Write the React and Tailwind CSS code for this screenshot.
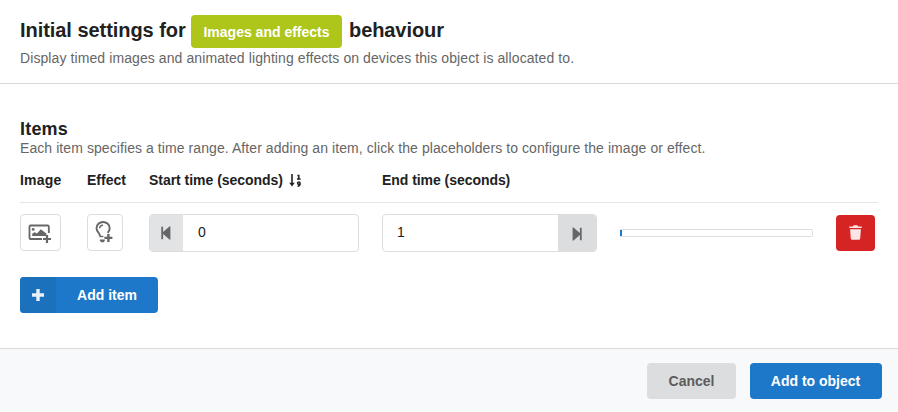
import React from "react";

function Bold({ className = "", children }) {
  return <span className={`font-bold whitespace-nowrap ${className}`}>{children}</span>;
}

function ImagePlusIcon() {
  return (
    <svg width="24" height="20" viewBox="0 0 24 20" fill="none">
      <path d="M14 15H2.5a1 1 0 0 1-1-1V2.5a1 1 0 0 1 1-1h17.3a1 1 0 0 1 1 1V9" stroke="#666" strokeWidth="1.8" />
      <circle cx="5.2" cy="5.4" r="1.4" fill="#666" />
      <path d="M4.2 12V9.8l2.4-1.6 2.4 1.4 3.8-4.4 5.6 4.4V12z" fill="#666" />
      <path d="M19 11v8M15 15h8" stroke="#666" strokeWidth="2.2" />
    </svg>
  );
}

function BulbPlusIcon() {
  return (
    <svg width="20" height="23" viewBox="0 0 20 23" fill="none">
      <path d="M6 14.9c0-2.8-3.5-4.2-3.5-7.7a6.6 6.2 0 0 1 13.2 0c0 2-1 3.3-2 4.7" stroke="#666" strokeWidth="1.9" />
      <path d="M5.6 7.2A3.5 3.3 0 0 1 9 4.2" stroke="#666" strokeWidth="1.4" />
      <path d="M5.4 15.5h4" stroke="#666" strokeWidth="1.4" />
      <path d="M5.8 18.4h5v1.3l-1.2 1.5H7.4l-1.6-1.5z" fill="#666" />
      <path d="M14.4 12.9v8M10.4 16.9h8" stroke="#666" strokeWidth="2.4" />
    </svg>
  );
}

function SortIcon() {
  return (
    <svg width="13" height="14" viewBox="0 0 13 14" fill="none" stroke="#212121">
      <path d="M3 0v10.5" strokeWidth="1.6" />
      <path d="M.2 8.8h5.6L3 12.4z" fill="#212121" stroke="none" />
      <path d="M8.4 1.5h1.4v3.3M8 5h3.6" strokeWidth="1.5" />
      <path d="M11 9.2a1.2 1.2 0 1 0-1.2 1.1H11V8.8M11 9.6c0 1.8-.8 2.6-2.4 2.7" strokeWidth="1.5" />
    </svg>
  );
}

function StepIcon({ flip }) {
  return (
    <svg width="10" height="14" viewBox="0 0 10 14" fill="#666" className={flip ? "-scale-x-100" : ""}>
      <path d="M.3.8h1.8v5.1L8.5.5q.9-.6.9.4v12.2q0 1-.9.4L2.1 8.1v5.2H.3z" />
    </svg>
  );
}

function TrashIcon() {
  return (
    <svg width="13" height="15" viewBox="0 0 13 15" fill="#fbe6e6">
      <path d="M.3 1.4h3.6L4.6.3h3.8l.7 1.1h3.6v1.7H.3zM1.1 4.2h10.8l-.7 9.3q-.1 1.2-1.3 1.2H3.1q-1.2 0-1.3-1.2z" />
    </svg>
  );
}

export default function App() {
  return (
    <div className="flex h-[412px] w-[898px] flex-col overflow-hidden bg-white font-['Liberation_Sans',Arial,sans-serif] text-[#212121]">
      <header className="h-[84px] shrink-0 border-b border-[#d9dadb] px-5 pt-[15px]">
        <h1 className="flex h-[33px] items-center text-[20px] leading-[30px]">
          <Bold className="w-[171px] -mt-[3px] tracking-[-0.05px]">Initial settings for</Bold>
          <span className="flex h-[33px] w-[151px] items-center justify-center rounded bg-[#aec61a] text-[14px] text-white">
            <Bold className="mt-[1px]">Images and effects</Bold>
          </span>
          <Bold className="ml-[7px] -mt-[3px] tracking-[-0.08px]">behaviour</Bold>
        </h1>
        <p className="whitespace-nowrap text-[14px] leading-[20px] tracking-[0.09px] text-[#666]">
          <span>Display timed images and animated lighting effects on devices this object is allocated to.</span>
        </p>
      </header>

      <main className="h-[264px] shrink-0 px-5 pt-[35px]">
        <h2 className="h-[19px] text-[18px] leading-[20px] tracking-[0.2px]"><Bold>Items</Bold></h2>
        <p className="h-5 whitespace-nowrap text-[14px] leading-[20px] tracking-[0.077px] text-[#666]">
          <span>Each item specifies a time range. After adding an item, click the placeholders to configure the image or effect.</span>
        </p>
        <div className="flex h-[45px] w-[858px] border-b border-[#e4e5e6] pt-[12px] text-[14px] leading-[20px]">
          <Bold className="w-[67px] tracking-[0.2px]">Image</Bold>
          <Bold className="w-[62px]">Effect</Bold>
          <div className="flex w-[233px]">
            <Bold className="w-[140px] tracking-[-0.03px]">Start time (seconds)</Bold>
            <span className="mt-[4px]"><SortIcon /></span>
          </div>
          <Bold className="tracking-[-0.05px]">End time (seconds)</Bold>
        </div>

        <div className="mt-[11px] flex h-[38px]">
          <button className="mr-[26px] flex h-[37px] w-[41px] items-center rounded border border-[#dcddde] pl-[7px] pt-[2px]"><ImagePlusIcon /></button>
          <button className="mr-[26px] flex h-[37px] w-9 items-center rounded border border-[#dcddde] pl-[6px]"><BulbPlusIcon /></button>
          <div className="mr-[23px] flex w-[210px] overflow-hidden rounded border border-[#dcddde] text-[14px]">
            <span className="flex w-[33px] items-center justify-center bg-[#e2e3e4] pr-px"><StepIcon /></span>
            <span className="pl-[15px] leading-[35px]">0</span>
          </div>
          <div className="mr-[23px] flex w-[215px] justify-between overflow-hidden rounded border border-[#dcddde] text-[14px]">
            <span className="pl-[14px] leading-[35px]">1</span>
            <span className="flex w-[38px] items-center justify-center bg-[#dcddde] pt-[2px]"><StepIcon flip /></span>
          </div>
          <div className="mr-[23px] mt-[15px] flex h-2 w-[193px] rounded-r-[2px] border border-l-0 border-[#dcddde]">
            <div className="h-full w-[1.5px] bg-[#1e78c8]" />
          </div>
          <button className="mt-px flex h-9 w-[39px] items-center justify-center rounded bg-[#d62424] pr-px pb-px"><TrashIcon /></button>
        </div>

        <button className="mt-[25px] flex h-9 w-[138px] overflow-hidden rounded bg-[#1e78c9] text-[14px] text-white">
          <span className="flex h-9 w-9 items-center justify-center bg-[#1c71bd]">
            <svg width="12" height="12" viewBox="0 0 12 12" fill="none" stroke="#e8f1f9" strokeWidth="3.4"><path d="M6 0v12M0 6h12" /></svg>
          </span>
          <Bold className="flex-1 text-center leading-[36px]">Add item</Bold>
        </button>
      </main>

      <footer className="flex h-16 shrink-0 justify-end gap-[14px] border-t border-[#d9dadb] bg-[#f8f9fb] pr-4 pt-[14px] text-[14px]">
        <button className="h-9 w-[89px] rounded bg-[#dcddde] text-[#5c5c5c]"><Bold>Cancel</Bold></button>
        <button className="h-9 w-[132px] rounded bg-[#1e78c9] pr-px text-white"><Bold>Add to object</Bold></button>
      </footer>
    </div>
  );
}
